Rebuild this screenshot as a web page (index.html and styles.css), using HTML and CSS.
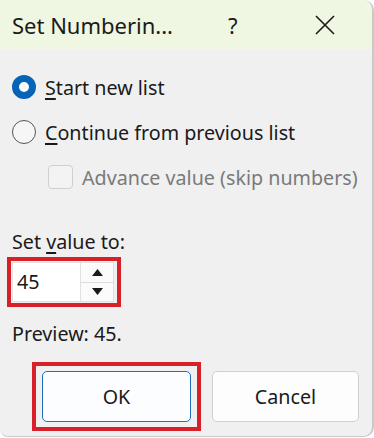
FILE: index.html
```html
<!DOCTYPE html>
<html>
<head>
<meta charset="utf-8">
<link rel="stylesheet" href="styles.css">
</head>
<body>
<div class="dialog">
  <div class="titlebar">
    <span class="title">Set Numberin...</span>
    <span class="help">?</span>
    <span class="close">
      <svg width="20" height="20" viewBox="0 0 20 20"><path d="M1 1 L19 19 M19 1 L1 19" stroke="#1a1a1a" stroke-width="1.6" fill="none"/></svg>
    </span>
  </div>
  <div class="body">
    <div class="option">
      <span class="radio checked"></span>
      <span class="label"><u>S</u>tart new list</span>
    </div>
    <div class="option">
      <span class="radio"></span>
      <span class="label"><u>C</u>ontinue from previous list</span>
    </div>
    <div class="option sub">
      <span class="checkbox"></span>
      <span class="label disabled">Advance value (skip numbers)</span>
    </div>
    <div class="field-label">Set <u>v</u>alue to:</div>
    <div class="highlight spin-wrap">
      <div class="spin">
        <span class="value">45</span>
        <span class="arrows">
          <span class="arrow up"><svg width="11" height="7" viewBox="0 0 11 7"><path d="M0 7 L5.5 0 L11 7 Z" fill="#1a1a1a"/></svg></span>
          <span class="arrow down"><svg width="11" height="7" viewBox="0 0 11 7"><path d="M0 0 L5.5 7 L11 0 Z" fill="#1a1a1a"/></svg></span>
        </span>
      </div>
    </div>
    <div class="preview">Preview: 45.</div>
    <div class="buttons">
      <div class="highlight ok-wrap">
        <div class="btn primary">OK</div>
      </div>
      <div class="btn cancel">Cancel</div>
    </div>
  </div>
</div>
</body>
</html>
```

FILE: styles.css
```css
html, body {
  margin: 0;
  padding: 0;
  background: #ffffff;
}
body {
  width: 374px;
  height: 438px;
  overflow: hidden;
  font-family: "Noto Sans", "Open Sans", sans-serif;
  color: #1a1a1a;
}
.dialog {
  width: 374px;
  height: 437px;
  background: #f0f0f0;
  border-right: 2px solid #c9c9c9;
  border-bottom: 1px solid #c9c9c9;
  border-radius: 0 10px 10px 8px;
  overflow: hidden;
  box-sizing: border-box;
}
.titlebar {
  height: 50px;
  background: #eff6e1;
  display: flex;
  align-items: center;
  padding-left: 12px;
  font-size: 22px;
}
.title {
  width: 216px;
}
.help {
  width: 87px;
  font-size: 22px;
}
.close {
  display: flex;
  align-items: center;
}
.body {
  padding: 25px 0 0 12px;
  font-size: 19.7px;
}
.option {
  display: flex;
  align-items: center;
  height: 24px;
  margin-bottom: 21px;
}
.option.sub {
  margin-left: 36px;
  margin-bottom: 0;
  height: 24px;
}
.radio {
  width: 24px;
  height: 24px;
  box-sizing: border-box;
  border-radius: 50%;
  border: 1.5px solid #555;
  background: #f6f6f6;
  margin-right: 9px;
  flex: none;
}
.radio.checked {
  border: 7px solid #0563b8;
  background: #fff;
}
.checkbox {
  width: 25px;
  height: 24px;
  box-sizing: border-box;
  border: 1px solid #cfcfcf;
  border-radius: 4px;
  background: #f3f3f3;
  margin-right: 9px;
  flex: none;
}
.label u, .field-label u {
  text-decoration-thickness: 1.5px;
  text-underline-offset: 3px;
}
.label.disabled {
  color: #7a7a7a;
}
.field-label {
  margin-top: 40px;
  line-height: 26px;
}
.highlight {
  border: 4px solid #d8202a;
}
.spin-wrap {
  margin-top: 2px;
  margin-left: -5px;
  width: 104px;
  height: 40px;
  padding: 1px;
  background: #f0f0f0;
}
.spin {
  width: 102px;
  height: 40px;
  background: #ffffff;
  border: 1px solid #e0e0e0;
  display: flex;
  box-sizing: border-box;
}
.value {
  flex: 1;
  line-height: 38px;
  padding-left: 4px;
}
.arrows {
  width: 32px;
  display: flex;
  flex-direction: column;
  border-left: 1px solid #e0e0e0;
}
.arrow {
  flex: 1;
  display: flex;
  align-items: center;
  justify-content: center;
  background: #fbfbfb;
}
.arrow.up {
  border-bottom: 1px solid #dcdcdc;
}
.preview {
  margin-top: 14px;
  line-height: 26px;
}
.buttons {
  display: flex;
  align-items: center;
  margin-top: 15px;
  margin-left: 20px;
}
.ok-wrap {
  width: 161px;
  height: 61px;
  display: flex;
  align-items: center;
  justify-content: center;
  margin-right: 11px;
}
.btn {
  width: 149px;
  height: 51px;
  box-sizing: border-box;
  background: #fdfdfd;
  border: 1px solid #d0d0d0;
  border-radius: 5px;
  display: flex;
  align-items: center;
  justify-content: center;
}
.btn.cancel {
  width: 147px;
}
.btn.primary {
  border: 1px solid #1f6fc0;
  background: #fcfdff;
}
```
